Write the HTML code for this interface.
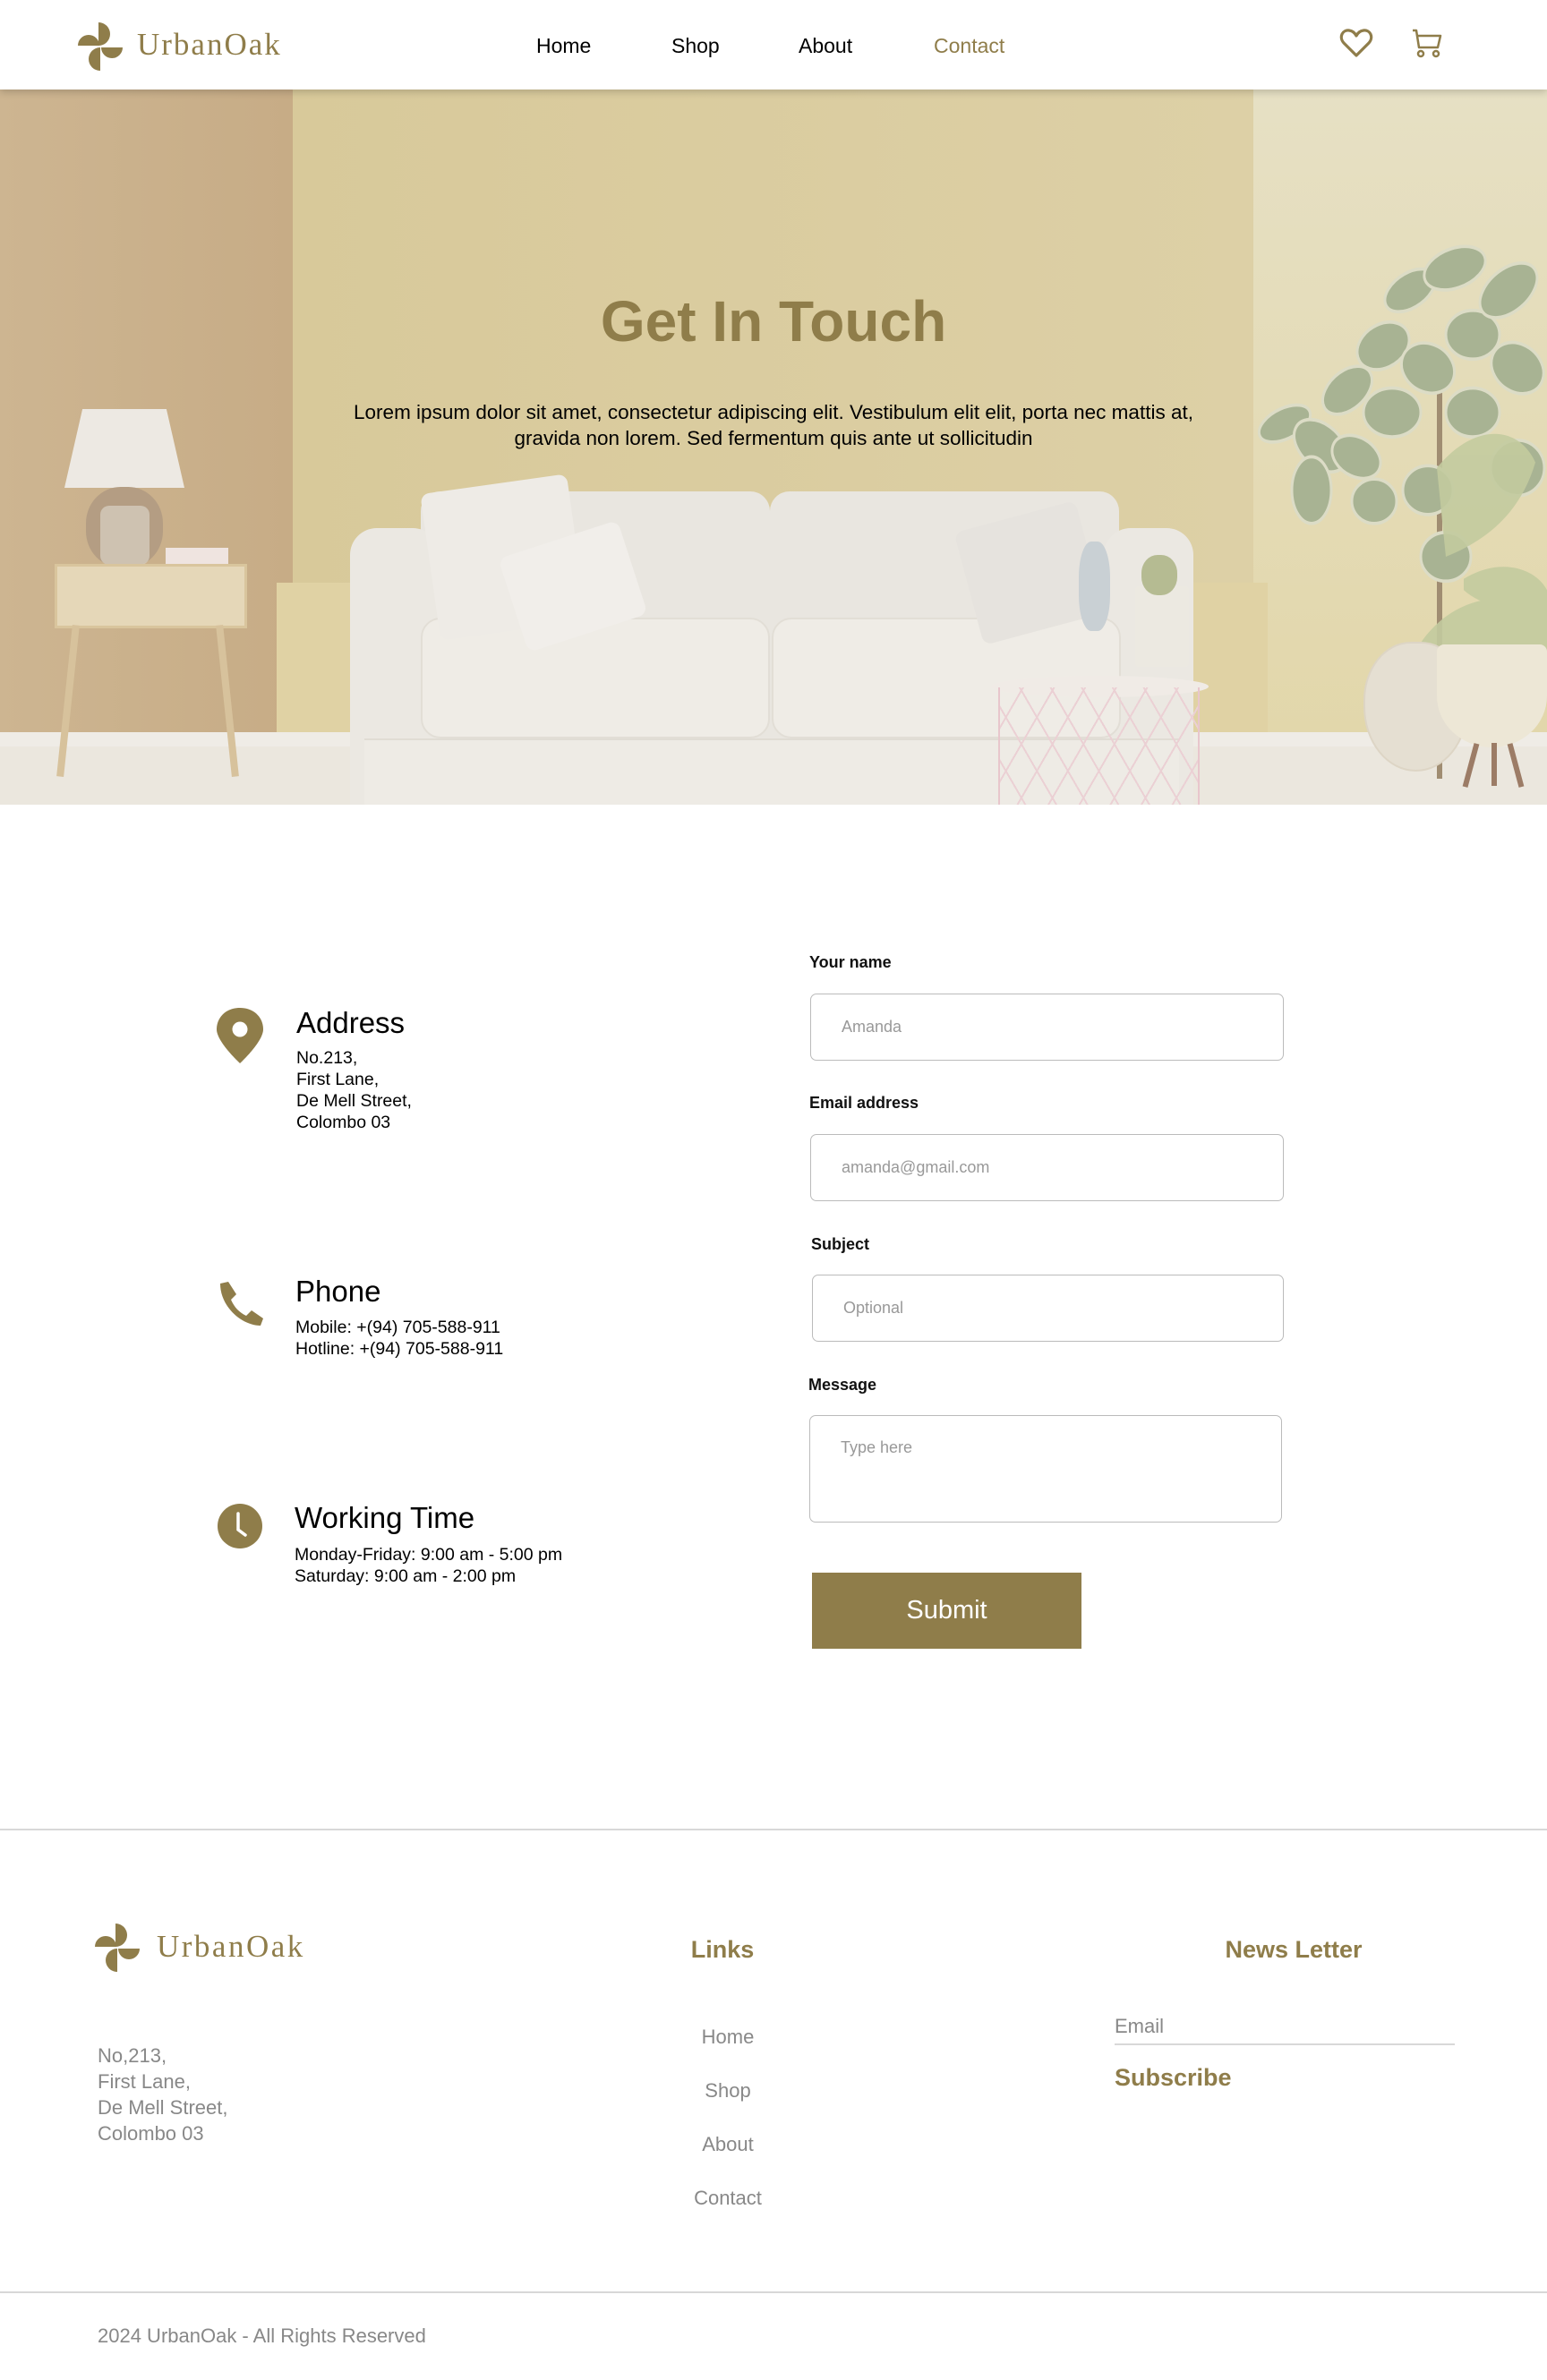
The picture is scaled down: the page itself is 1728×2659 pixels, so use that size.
<!DOCTYPE html>
<html><head><meta charset="utf-8">
<style>
*{margin:0;padding:0;box-sizing:border-box}
body{width:1728px;height:2659px;position:relative;background:#fff;font-family:"Liberation Sans",sans-serif;color:#000;overflow:hidden}
.abs{position:absolute}
.gold{color:#8f7d4a}
.nav a{position:absolute;top:38px;font-size:23px;color:#000;text-decoration:none}
.hero{position:absolute;left:0;top:100px;width:1728px;height:799px;overflow:hidden;background:#dccd9e}
.lbl{position:absolute;font-size:18px;font-weight:bold;color:#111}
.inp{position:absolute;border:1.5px solid #bbb;border-radius:7px;font-size:18px;color:#999;padding-left:34px}
.ih{position:absolute;font-size:33px;color:#000}
.it{position:absolute;font-size:19.5px;line-height:24px;color:#000}
.fl{position:absolute;font-size:22px;color:#888;text-align:center;width:200px}
</style></head><body>

<!-- header -->
<div class="abs" style="left:0;top:0;width:1728px;height:100px;background:#fff;box-shadow:0 3px 8px rgba(0,0,0,.18);z-index:2">
<svg class="abs" style="left:82px;top:22px" width="60" height="60" viewBox="0 0 60 60">
<g fill="#8f7d4a">
<path d="M28 3 A13 13 0 0 1 28 29 Z"/>
<path d="M5 29 A12 12 0 0 1 29 29 Z"/>
<path d="M30 31 A13 13 0 0 1 30 57 Z" transform="rotate(180 30 44)"/>
<path d="M31 31 A12 12 0 0 0 55 31 Z"/>
</g></svg>
<div class="abs gold" style="left:153px;top:30px;font-family:'Liberation Serif',serif;font-size:35px;letter-spacing:2px">UrbanOak</div>
<div class="nav">
<a style="left:599px">Home</a><a style="left:750px">Shop</a><a style="left:892px">About</a><a style="left:1043px;color:#8f7d4a">Contact</a>
</div>
<svg class="abs" style="left:1496px;top:31px" width="38" height="34" viewBox="0 0 38 34"><path d="M19 31 L5 17 C-1 10 4 2 11 3 C15 3.5 17.5 6 19 9 C20.5 6 23 3.5 27 3 C34 2 39 10 33 17 Z" fill="none" stroke="#8f7d4a" stroke-width="3.2" stroke-linejoin="round"/></svg>
<svg class="abs" style="left:1577px;top:31px" width="36" height="36" viewBox="0 0 36 36"><g fill="none" stroke="#8f7d4a" stroke-width="2.5" stroke-linejoin="round"><path d="M1 3 H5 L8 22 H29 L32 9 H6"/><circle cx="10" cy="29" r="3"/><circle cx="27" cy="29" r="3"/></g></svg>
</div>

<!-- hero -->
<div class="hero">
<div class="abs" style="left:0;top:0;width:327px;height:799px;background:linear-gradient(90deg,#cdb591,#c7ac86)"></div>
<div class="abs" style="left:327px;top:0;width:1073px;height:799px;background:linear-gradient(90deg,#d8c99a,#ddd0a6)"></div>
<div class="abs" style="left:1400px;top:0;width:328px;height:799px;background:linear-gradient(180deg,#e6e0c4,#e2d6a8)"></div>
<div class="abs" style="left:309px;top:551px;width:1107px;height:190px;background:#e0d2a4"></div>
<div class="abs" style="left:0;top:734px;width:1728px;height:65px;background:#ebe7de"></div>
<div class="abs" style="left:0;top:718px;width:1728px;height:16px;background:#efece6"></div>
<!-- lamp + table -->
<div class="abs" style="left:72px;top:357px;width:134px;height:88px;background:#ede9e3;clip-path:polygon(15% 0,85% 0,100% 100%,0 100%)"></div>
<div class="abs" style="left:96px;top:444px;width:86px;height:90px;border-radius:45%;background:#b49d83"></div>
<div class="abs" style="left:112px;top:465px;width:55px;height:66px;border-radius:10px;background:#d9d2c4;opacity:.7"></div>
<div class="abs" style="left:185px;top:512px;width:70px;height:20px;background:#efe4e0"></div>
<div class="abs" style="left:61px;top:530px;width:215px;height:72px;background:#e5d7b8;border:3px solid #d9c59d"></div>
<div class="abs" style="left:72px;top:598px;width:8px;height:170px;background:#d7c29c;transform:rotate(6deg)"></div>
<div class="abs" style="left:250px;top:598px;width:8px;height:170px;background:#d7c29c;transform:rotate(-6deg)"></div>
<!-- sofa -->
<div class="abs" style="left:470px;top:449px;width:390px;height:300px;background:#e9e6e0;border-radius:22px"></div>
<div class="abs" style="left:860px;top:449px;width:390px;height:300px;background:#e9e6e0;border-radius:22px"></div>
<div class="abs" style="left:391px;top:490px;width:100px;height:370px;background:#ebe8e2;border-radius:30px"></div>
<div class="abs" style="left:1233px;top:490px;width:100px;height:370px;background:#ebe8e2;border-radius:30px"></div>
<div class="abs" style="left:470px;top:590px;width:390px;height:135px;background:#efece6;border-radius:22px;border:2px solid #e2ded6"></div>
<div class="abs" style="left:862px;top:590px;width:390px;height:135px;background:#efece6;border-radius:22px;border:2px solid #e2ded6"></div>
<div class="abs" style="left:407px;top:725px;width:910px;height:75px;background:#eeebe5;border-top:2px solid #e0dcd4"></div>
<div class="abs" style="left:480px;top:440px;width:165px;height:165px;background:#eeebe6;transform:rotate(-8deg);border-radius:10px"></div>
<div class="abs" style="left:570px;top:500px;width:140px;height:110px;background:#f1eeea;transform:rotate(-18deg);border-radius:10px"></div>
<div class="abs" style="left:1080px;top:475px;width:140px;height:130px;background:#e6e3de;transform:rotate(-15deg);border-radius:10px"></div>
<div class="abs" style="left:1205px;top:505px;width:35px;height:100px;background:#c9d0d4;border-radius:40%"></div>
<div class="abs" style="left:1268px;top:555px;width:60px;height:90px;background:#ece9e1;border-radius:4px"></div>
<div class="abs" style="left:1275px;top:520px;width:40px;height:45px;background:#b5bb92;border-radius:45%"></div>
<!-- pink table -->
<div class="abs" style="left:1107px;top:655px;width:243px;height:24px;background:#f0ebe6;border-radius:50%"></div>
<div class="abs" style="left:1115px;top:668px;width:225px;height:140px;border-left:2px solid #e8c6cc;border-right:2px solid #e8c6cc;background:repeating-linear-gradient(60deg,transparent 0 28px,#ebd0d4 28px 30px),repeating-linear-gradient(-60deg,transparent 0 28px,#ebd0d4 28px 30px)"></div>
<!-- plant -->
<svg class="abs" style="left:1395px;top:150px" width="333" height="620" viewBox="0 0 333 500" preserveAspectRatio="none">
<rect x="210" y="120" width="6" height="480" fill="#a08d72"/>
<g fill="#a8b393" stroke="#dcdcc6" stroke-width="3">
<ellipse cx="40" cy="180" rx="30" ry="14" transform="rotate(-20 40 180)"/>
<ellipse cx="80" cy="200" rx="32" ry="20" transform="rotate(30 80 200)"/>
<ellipse cx="70" cy="240" rx="22" ry="30"/>
<ellipse cx="110" cy="150" rx="30" ry="18" transform="rotate(-30 110 150)"/>
<ellipse cx="120" cy="210" rx="28" ry="18" transform="rotate(20 120 210)"/>
<ellipse cx="150" cy="110" rx="30" ry="20" transform="rotate(-20 150 110)"/>
<ellipse cx="160" cy="170" rx="32" ry="22"/>
<ellipse cx="180" cy="60" rx="30" ry="16" transform="rotate(-25 180 60)"/>
<ellipse cx="200" cy="130" rx="30" ry="22" transform="rotate(15 200 130)"/>
<ellipse cx="230" cy="40" rx="35" ry="18" transform="rotate(-15 230 40)"/>
<ellipse cx="250" cy="100" rx="30" ry="22"/>
<ellipse cx="290" cy="60" rx="35" ry="20" transform="rotate(-30 290 60)"/>
<ellipse cx="300" cy="130" rx="30" ry="22" transform="rotate(20 300 130)"/>
<ellipse cx="250" cy="170" rx="30" ry="22"/>
<ellipse cx="140" cy="250" rx="25" ry="20"/>
<ellipse cx="200" cy="240" rx="28" ry="22"/>
<ellipse cx="300" cy="220" rx="30" ry="25"/>
<ellipse cx="220" cy="300" rx="28" ry="22"/>
</g>
<g fill="#c3cb9f" opacity=".9">
<path d="M210 220 C250 180 300 180 320 215 C300 270 250 290 220 300 Z"/>
<path d="M190 380 C230 330 300 330 333 350 L333 390 C280 380 230 385 190 400 Z"/>
<path d="M240 320 C280 300 320 310 333 330 L333 360 C300 350 260 345 240 330 Z"/>
</g>
</svg>
<div class="abs" style="left:1523px;top:617px;width:117px;height:145px;background:#e5dfd2;border-radius:45% 45% 50% 50%;border:2px solid #ddd5c5"></div>
<div class="abs" style="left:1605px;top:620px;width:123px;height:115px;background:#ede7d6;border-radius:8px 8px 50% 50%"></div>
<div class="abs" style="left:1640px;top:730px;width:6px;height:50px;background:#9c7c66;transform:rotate(15deg)"></div>
<div class="abs" style="left:1690px;top:730px;width:6px;height:50px;background:#9c7c66;transform:rotate(-15deg)"></div>
<div class="abs" style="left:1666px;top:730px;width:6px;height:48px;background:#9c7c66"></div>

<div class="abs gold" style="left:0;top:222px;width:1728px;text-align:center;font-size:64px;font-weight:bold">Get In Touch</div>
<div class="abs" style="left:384px;top:346px;width:960px;text-align:center;font-size:22.5px;line-height:29px;color:#000">Lorem ipsum dolor sit amet, consectetur adipiscing elit. Vestibulum elit elit, porta nec mattis at, gravida non lorem. Sed fermentum quis ante ut sollicitudin</div>
</div>

<!-- contact info -->
<svg class="abs" style="left:240px;top:1124px" width="56" height="66" viewBox="0 0 56 66"><path d="M28 2 C12 2 2 13 2 26 C2 40 28 64 28 64 C28 64 54 40 54 26 C54 13 44 2 28 2 Z" fill="#8f7d4a"/><circle cx="28" cy="26" r="8.5" fill="#fff"/></svg>
<div class="ih" style="left:331px;top:1124px">Address</div>
<div class="it" style="left:331px;top:1170px">No.213,<br>First Lane,<br>De Mell Street,<br>Colombo 03</div>

<svg class="abs" style="left:242px;top:1430px" width="54" height="54" viewBox="0 0 54 54"><path d="M4 4 L13 2 L22 16 L16 22 C20 31 25 36 33 40 L39 34 L52 43 L49 51 C28 51 4 30 4 4 Z" fill="#8f7d4a"/></svg>
<div class="ih" style="left:330px;top:1424px">Phone</div>
<div class="it" style="left:330px;top:1471px">Mobile: +(94) 705-588-911<br>Hotline: +(94) 705-588-911</div>

<svg class="abs" style="left:242px;top:1679px" width="52" height="52" viewBox="0 0 52 52"><circle cx="26" cy="26" r="25" fill="#8f7d4a"/><path d="M24 12 V30 L32 36" fill="none" stroke="#fff" stroke-width="3.5" stroke-linecap="round"/></svg>
<div class="ih" style="left:329px;top:1677px">Working Time</div>
<div class="it" style="left:329px;top:1725px">Monday-Friday: 9:00 am - 5:00 pm<br>Saturday: 9:00 am - 2:00 pm</div>

<!-- form -->
<div class="lbl" style="left:904px;top:1065px">Your name</div>
<div class="inp" style="left:905px;top:1110px;width:529px;height:75px;line-height:72px">Amanda</div>
<div class="lbl" style="left:904px;top:1222px">Email address</div>
<div class="inp" style="left:905px;top:1267px;width:529px;height:75px;line-height:72px">amanda@gmail.com</div>
<div class="lbl" style="left:906px;top:1380px">Subject</div>
<div class="inp" style="left:907px;top:1424px;width:527px;height:75px;line-height:72px">Optional</div>
<div class="lbl" style="left:903px;top:1537px">Message</div>
<div class="inp" style="left:904px;top:1581px;width:528px;height:120px;padding-top:24px;line-height:22px">Type here</div>
<div class="abs" style="left:907px;top:1757px;width:301px;height:85px;background:#8f7d4a;color:#fff;font-size:29px;text-align:center;line-height:85px">Submit</div>

<!-- footer -->
<div class="abs" style="left:0;top:2043px;width:1728px;height:2px;background:#d8d8d8"></div>
<svg class="abs" style="left:101px;top:2146px" width="60" height="60" viewBox="0 0 60 60">
<g fill="#8f7d4a">
<path d="M28 3 A13 13 0 0 1 28 29 Z"/>
<path d="M5 29 A12 12 0 0 1 29 29 Z"/>
<path d="M30 31 A13 13 0 0 1 30 57 Z" transform="rotate(180 30 44)"/>
<path d="M31 31 A12 12 0 0 0 55 31 Z"/>
</g></svg>
<div class="abs gold" style="left:175px;top:2155px;font-family:'Liberation Serif',serif;font-size:35px;letter-spacing:2.5px">UrbanOak</div>
<div class="abs gold" style="left:707px;top:2163px;width:200px;text-align:center;font-size:27px;font-weight:bold">Links</div>
<div class="abs gold" style="left:1295px;top:2163px;width:300px;text-align:center;font-size:27px;font-weight:bold">News Letter</div>
<div class="abs" style="left:109px;top:2282px;font-size:22px;line-height:29px;color:#888">No,213,<br>First Lane,<br>De Mell Street,<br>Colombo 03</div>
<div class="fl" style="left:713px;top:2263px">Home</div>
<div class="fl" style="left:713px;top:2323px">Shop</div>
<div class="fl" style="left:713px;top:2383px">About</div>
<div class="fl" style="left:713px;top:2443px">Contact</div>
<div class="abs" style="left:1245px;top:2251px;font-size:22px;color:#888">Email</div>
<div class="abs" style="left:1245px;top:2283px;width:380px;height:2px;background:#d8d8d8"></div>
<div class="abs gold" style="left:1245px;top:2306px;font-size:27px;font-weight:bold">Subscribe</div>
<div class="abs" style="left:0;top:2560px;width:1728px;height:2px;background:#d8d8d8"></div>
<div class="abs" style="left:109px;top:2597px;font-size:22px;color:#888">2024 UrbanOak - All Rights Reserved</div>
</body></html>
